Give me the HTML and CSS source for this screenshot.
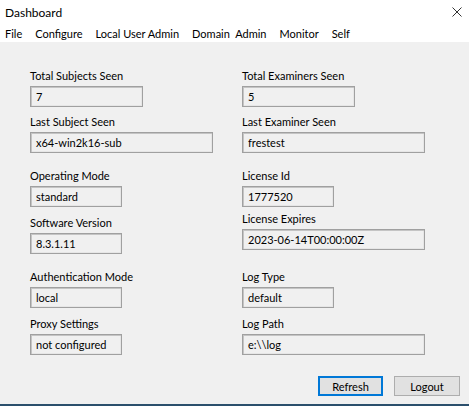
FILE: index.html
```html
<!DOCTYPE html>
<html>
<head>
<meta charset="utf-8">
<title>Dashboard</title>
<link rel="stylesheet" href="styles.css">
</head>
<body>
<div class="window">
  <div class="titlebar">
    <span class="title">Dashboard</span>
    <span class="close" aria-label="Close">
      <svg width="10" height="10" viewBox="0 0 10 10"><path d="M0.5 0.5 L9.5 9.5 M9.5 0.5 L0.5 9.5" stroke="#333" stroke-width="1" fill="none"/></svg>
    </span>
  </div>
  <div class="menubar">
    <span class="menu-item">File</span>
    <span class="menu-item">Configure</span>
    <span class="menu-item">Local User Admin</span>
    <span class="menu-item">Domain  Admin</span>
    <span class="menu-item">Monitor</span>
    <span class="menu-item">Self</span>
  </div>
  <div class="client">
    <div class="columns">
      <div class="column left">
        <div class="field">
          <div class="label">Total Subjects Seen</div>
          <div class="box w-md">7</div>
        </div>
        <div class="field g6">
          <div class="label">Last Subject Seen</div>
          <div class="box w-lg">x64-win2k16-sub</div>
        </div>
        <div class="field g14">
          <div class="label">Operating Mode</div>
          <div class="box w-sm">standard</div>
        </div>
        <div class="field g7">
          <div class="label">Software Version</div>
          <div class="box w-sm">8.3.1.11</div>
        </div>
        <div class="field g14">
          <div class="label">Authentication Mode</div>
          <div class="box w-sm">local</div>
        </div>
        <div class="field g7">
          <div class="label">Proxy Settings</div>
          <div class="box w-sm">not configured</div>
        </div>
      </div>
      <div class="column right">
        <div class="field">
          <div class="label">Total Examiners Seen</div>
          <div class="box w-md">5</div>
        </div>
        <div class="field g6">
          <div class="label">Last Examiner Seen</div>
          <div class="box w-lg">frestest</div>
        </div>
        <div class="field g14">
          <div class="label">License Id</div>
          <div class="box w-sm">1777520</div>
        </div>
        <div class="field g3">
          <div class="label">License Expires</div>
          <div class="box w-lg">2023-06-14T00:00:00Z</div>
        </div>
        <div class="field g18">
          <div class="label">Log Type</div>
          <div class="box w-sm">default</div>
        </div>
        <div class="field g7">
          <div class="label">Log Path</div>
          <div class="box w-lg">e:\\log</div>
        </div>
      </div>
    </div>
    <div class="footer">
      <button class="btn default">Refresh</button>
      <button class="btn">Logout</button>
    </div>
  </div>
</div>
</body>
</html>
```

FILE: styles.css
```css
* { box-sizing: border-box; }
html, body { margin: 0; padding: 0; }
body {
  width: 469px;
  height: 406px;
  overflow: hidden;
  font-family: Lato, "Liberation Sans", sans-serif;
  color: #000;
  background: #fff;
}
.window {
  display: flex;
  flex-direction: column;
  height: 406px;
}
.titlebar {
  height: 24px;
  background: #fff;
  display: flex;
  align-items: center;
  justify-content: space-between;
  padding: 0 7px 0 5px;
}
.title {
  font-size: 12px;
}
.close {
  display: flex;
  width: 10px;
  height: 10px;
}
.menubar {
  height: 18px;
  background: #fff;
  display: flex;
  align-items: center;
  padding-left: 0;
  font-size: 11px;
}
.menu-item {
  padding: 0 6px 0 5px;
  white-space: pre;
}
.menu-item + .menu-item { padding-left: 7px; }
.client {
  flex: 1;
  background: #f0f0f0;
  border-bottom: 2px solid #2b4f6c;
  display: flex;
  flex-direction: column;
  padding: 25px 9px 8px 30px;
}
.columns {
  display: flex;
}
.column {
  display: flex;
  flex-direction: column;
}
.column.left { width: 212px; }
.field {
  display: flex;
  flex-direction: column;
}
.g3 { margin-top: 3px; }
.g6 { margin-top: 6px; }
.g7 { margin-top: 7px; }
.g14 { margin-top: 14px; }
.g18 { margin-top: 18px; }
.label {
  font-size: 11px;
  line-height: 14px;
  height: 16px;
  padding-top: 2px;
  margin-bottom: 3px;
  white-space: nowrap;
}
.box {
  height: 21px;
  border: 1px solid #a0a0a0;
  box-shadow: inset 1px 1px 0 #c4c4c4, inset -1px -1px 0 #e6e6e6;
  background: #f0f0f0;
  font-size: 11px;
  line-height: 19px;
  padding-left: 5px;
  white-space: nowrap;
}
.w-sm { width: 92px; }
.w-md { width: 113px; }
.w-lg { width: 183px; }
.footer {
  margin-top: auto;
  display: flex;
  justify-content: flex-end;
  gap: 11px;
}
.btn {
  width: 66px;
  height: 20px;
  font-family: inherit;
  font-size: 11px;
  background: #e1e1e1;
  border: 1px solid #adadad;
  padding: 0;
  color: #000;
}
.btn.default {
  width: 65px;
  border: 2px solid #0078d7;
}
```
